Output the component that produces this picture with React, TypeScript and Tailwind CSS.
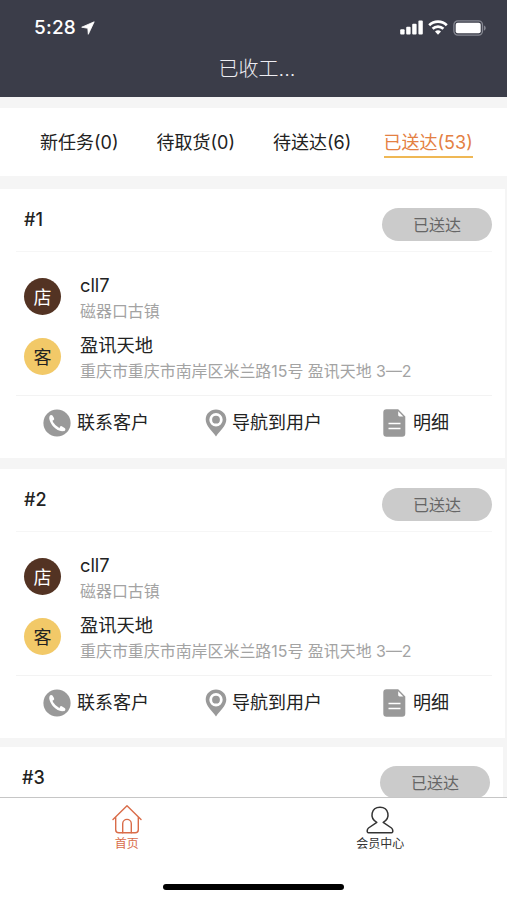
import React from 'react';

const tabs = [
  { label: '新任务', count: 0 },
  { label: '待取货', count: 0 },
  { label: '待送达', count: 6 },
  { label: '已送达', count: 53 },
];

function StatusBar() {
  return (
    <div className="flex h-[55px] items-center pl-[34px] pr-[21px] text-white">
      <span className="w-[46px] whitespace-nowrap text-[19px] font-medium leading-6 tracking-[0.2px]">5:28</span>
      <svg className="ml-px h-[14px] w-[14px]" viewBox="0 0 14 14" fill="currentColor" stroke="currentColor" strokeWidth="0.8" strokeLinejoin="round">
        <path d="M13.200.800.700 6.200l6.100 1.100.500 6z" />
      </svg>
      <div className="ml-auto flex items-center">
        <svg className="h-[15px] w-[24px]" viewBox="0 0 24 15" fill="currentColor">
          <rect x="0.2" y="9.2" width="4.4" height="5.4" rx="1" />
          <rect x="6.2" y="6.8" width="4.4" height="7.8" rx="1" />
          <rect x="12.2" y="3.8" width="4.4" height="10.8" rx="1" />
          <rect x="18.4" y="0.5" width="4.4" height="14.1" rx="1" />
        </svg>
        <svg className="ml-[4px] h-[15px] w-[20px]" viewBox="0 0 20 15" fill="none" stroke="currentColor" strokeWidth="2.7">
          <path d="M1.2 5.2a12.6 12.6 0 0 1 17.6 0" />
          <path d="M4.6 8.8a7.8 7.8 0 0 1 10.8 0" />
          <path d="M10 14.7 7 11.6a4.3 4.3 0 0 1 6 0z" fill="currentColor" stroke="none" />
        </svg>
        <svg className="ml-[5px] h-[16px] w-[33px]" viewBox="0 0 33 16">
          <rect x="0.9" y="0.9" width="28.6" height="14.2" rx="4" fill="none" stroke="#858791" strokeWidth="1.3" />
          <rect x="2.7" y="2.7" width="25" height="10.6" rx="2" fill="#fff" />
          <path d="M31 5.4c2.3.8 2.3 4.4 0 5.2z" fill="#858791" />
        </svg>
      </div>
    </div>
  );
}

function PhoneIcon() {
  return (
    <svg className="h-[28px] w-[28px]" viewBox="0 0 28 28" fill="none" stroke="#fff" strokeLinecap="round">
      <circle cx="14" cy="14" r="13.6" fill="#999" stroke="none" />
      <path d="M7.500 9C8 14.500 13.500 20.300 19.300 20.900" strokeWidth="2.600" />
      <path d="M8.200 7.700 9.500 9.800M18.300 18.900l2.400 1.500" strokeWidth="3.400" />
    </svg>
  );
}

function PinIcon() {
  return (
    <svg className="h-[28px] w-[22px]" viewBox="0 0 22 28">
      <path d="M11 .5C5.200.500.700 4.900.700 10.500.700 17 7 21.500 11 27.500 15 21.500 21.300 17 21.300 10.500 21.300 4.900 16.800.500 11 .500z" fill="#999" />
      <circle cx="11" cy="10.700" r="5.300" fill="#999" stroke="#fff" strokeWidth="2.800" />
    </svg>
  );
}

function DocIcon() {
  return (
    <svg className="h-[28px] w-[23px]" viewBox="0 0 23 28">
      <path d="M3.500.300h11.700l7.100 7.300v16.900a3.200 3.200 0 0 1-3.200 3.200H3.500a3.200 3.200 0 0 1-3.200-3.200v-21A3.200 3.200 0 0 1 3.500.300z" fill="#999" />
      <path d="M15.200 2.200v3.900c0 .900.500 1.400 1.400 1.400h3.700z" fill="#fff" />
      <path d="M5.500 14.500h12M5.500 19.500h12" stroke="#fff" strokeWidth="1.700" />
    </svg>
  );
}

function Place({ mark, color, title, address }: { mark: string; color: string; title: string; address: string }) {
  return (
    <div className="flex h-[60px] items-start">
      <div className={`mt-[4px] h-[37px] w-[37px] shrink-0 rounded-full pt-px text-center text-[18px] leading-[37px] ${color}`}>
        {mark}
      </div>
      <div className="ml-[19px] whitespace-nowrap">
        <div className="-mt-[4px] h-[30px] text-[18.300px] leading-[30px] text-[#222]">{title}</div>
        <div className="h-[24px] text-[15.950px] leading-[24px] text-[#a3a3a3]">{address}</div>
      </div>
    </div>
  );
}

function OrderHeader({ id }: { id: number }) {
  return (
    <div className="flex h-[62px] items-start justify-between pl-[8px]">
      <span className="pt-[19px] text-[18px] font-medium leading-[24px] text-[#222]">#{id}</span>
      <span className="mt-[19px] h-[33px] w-[110px] rounded-full bg-[#cbcbcb] pt-px text-center text-[16px] leading-[33px] text-[#666]">已送达</span>
    </div>
  );
}

function OrderCard({ id }: { id: number }) {
  return (
    <section className="h-[269px] w-[505px] shrink-0 bg-white pl-[16px] pr-[13px]">
      <OrderHeader id={id} />
      <div className="h-[144px] border-t border-[#f6f6f6] pl-[8px] pt-[22px]">
        <Place mark="店" color="bg-[#533323] text-white" title="cll7" address="磁器口古镇" />
        <Place mark="客" color="bg-[#f2c968] text-[#222]" title="盈讯天地" address="重庆市重庆市南岸区米兰路15号 盈讯天地 3—2" />
      </div>
      <div className="flex h-[55px] items-center border-t border-[#f3f3f3] text-[18px] leading-[28px] text-[#222]">
        <div className="ml-[27px] flex w-[162px] items-center gap-[6px]"><PhoneIcon />联系客户</div>
        <div className="flex w-[178px] items-center gap-[5px]"><PinIcon />导航到用户</div>
        <div className="flex items-center gap-[7px]"><DocIcon />明细</div>
      </div>
    </section>
  );
}

export default function App() {
  return (
    <div className="flex h-[900px] w-[507px] flex-col overflow-hidden bg-[#f5f5f5] font-['Inter','Noto_Sans_CJK_SC',sans-serif]">
      <header className="h-[97px] shrink-0 bg-[#3b3d49]">
        <StatusBar />
        <h1 className="pl-[7px] text-center text-[20px] font-light leading-[28px] text-[#eeeef3]">已收工...</h1>
      </header>
      <nav className="mt-[11px] flex h-[68px] shrink-0 items-start gap-[38px] bg-white pl-[40px] pt-[20px]">
        {tabs.map((tab, i) => (
          <div
            key={tab.label}
            className={`h-[30px] whitespace-nowrap pt-px text-[18px] leading-[27px] ${
              i === 3 ? 'ml-[-6px] border-b-2 border-[#efb855] text-[#e48043]' : 'w-[78.500px] text-[#222]'
            }`}
          >
            {tab.label}({tab.count})
          </div>
        ))}
      </nav>
      <main className="mt-[13px] flex h-[608px] shrink-0 flex-col">
        <OrderCard id={1} />
        <div className="h-[11px] shrink-0" />
        <OrderCard id={2} />
        <section className="mt-[9px] h-[50px] w-[503px] bg-white pl-[14px] pr-[13px]">
          <OrderHeader id={3} />
        </section>
      </main>
      <footer className="relative h-[103px] shrink-0 border-t border-[#c6c6c6] bg-white">
        <div className="grid h-[89px] grid-cols-2 text-[12px] leading-[18px]">
          <div className="flex flex-col items-center pt-[7px] text-[#d96c49]">
            <svg className="h-[30px] w-[30px]" viewBox="0 0 30 30" fill="none" stroke="currentColor" strokeWidth="1.400" strokeLinejoin="round" strokeLinecap="round">
              <path d="M1 14.500 15 .800l14 13.700M3.700 12.500v12.200c0 2 1.200 3.100 3.100 3.100h16.400c1.900 0 3.100-1.100 3.100-3.100V12.500" />
              <path d="M10.700 27.800v-9.100a4.300 4.300 0 0 1 8.600 0v9.100" />
            </svg>
            首页
          </div>
          <div className="flex flex-col items-center pt-[7px] text-[#333]">
            <svg className="h-[30px] w-[28px]" viewBox="0 0 28 30" fill="none" stroke="currentColor" strokeWidth="1.500" strokeLinejoin="round">
              <path d="M10.800 17.300C3 13 5.200 2.200 14 2.200s11 10.800 3.200 15.100l8.300 5.700c1.600 1.200 1.900 4.800 0 4.800h-23c-1.900 0-1.600-3.600 0-4.800z" />
            </svg>
            会员中心
          </div>
        </div>
        <div className="mx-auto -mt-[3px] h-[6px] w-[181px] rounded-full bg-black" />
      </footer>
    </div>
  );
}
